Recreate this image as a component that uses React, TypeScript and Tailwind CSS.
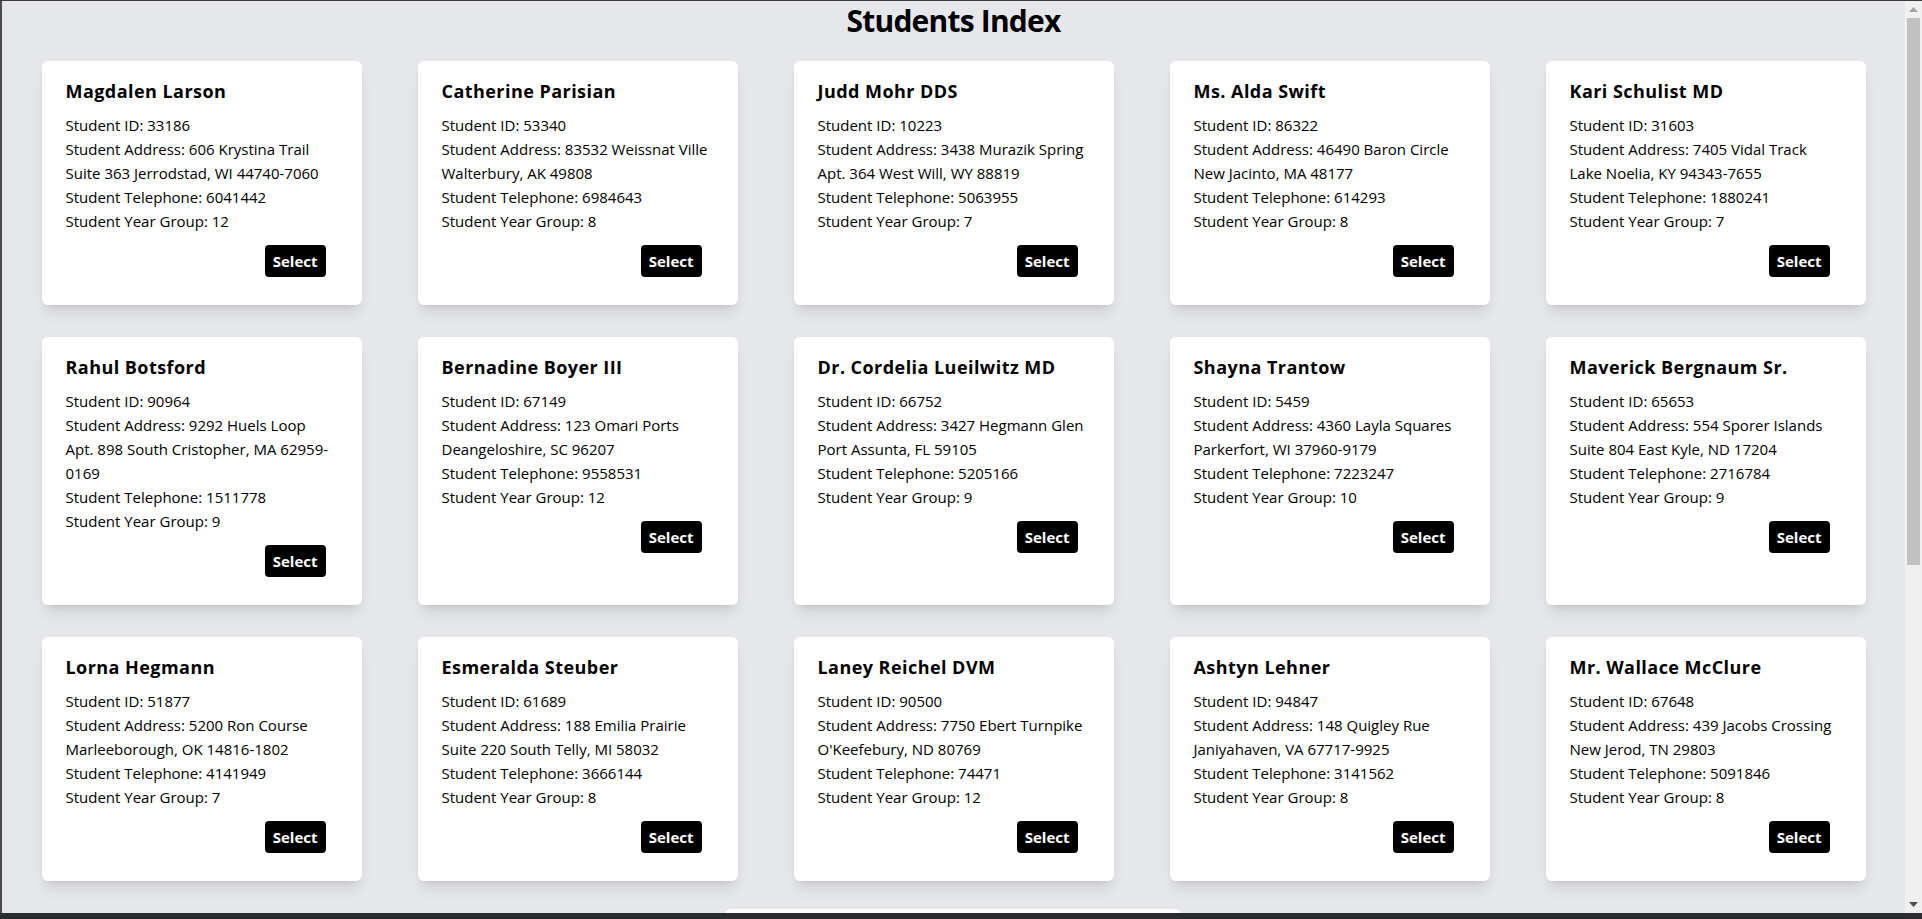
type Student = {
  name: string;
  id: string;
  address: string[];
  telephone: string;
  yearGroup: string;
};

const students: Student[] = [
  { name: "Magdalen Larson", id: "33186", address: ["606 Krystina Trail", "Suite 363 Jerrodstad, WI 44740-7060"], telephone: "6041442", yearGroup: "12" },
  { name: "Catherine Parisian", id: "53340", address: ["83532 Weissnat Ville", "Walterbury, AK 49808"], telephone: "6984643", yearGroup: "8" },
  { name: "Judd Mohr DDS", id: "10223", address: ["3438 Murazik Spring", "Apt. 364 West Will, WY 88819"], telephone: "5063955", yearGroup: "7" },
  { name: "Ms. Alda Swift", id: "86322", address: ["46490 Baron Circle", "New Jacinto, MA 48177"], telephone: "614293", yearGroup: "8" },
  { name: "Kari Schulist MD", id: "31603", address: ["7405 Vidal Track", "Lake Noelia, KY 94343-7655"], telephone: "1880241", yearGroup: "7" },
  { name: "Rahul Botsford", id: "90964", address: ["9292 Huels Loop", "Apt. 898 South Cristopher, MA 62959-", "0169"], telephone: "1511778", yearGroup: "9" },
  { name: "Bernadine Boyer III", id: "67149", address: ["123 Omari Ports", "Deangeloshire, SC 96207"], telephone: "9558531", yearGroup: "12" },
  { name: "Dr. Cordelia Lueilwitz MD", id: "66752", address: ["3427 Hegmann Glen", "Port Assunta, FL 59105"], telephone: "5205166", yearGroup: "9" },
  { name: "Shayna Trantow", id: "5459", address: ["4360 Layla Squares", "Parkerfort, WI 37960-9179"], telephone: "7223247", yearGroup: "10" },
  { name: "Maverick Bergnaum Sr.", id: "65653", address: ["554 Sporer Islands", "Suite 804 East Kyle, ND 17204"], telephone: "2716784", yearGroup: "9" },
  { name: "Lorna Hegmann", id: "51877", address: ["5200 Ron Course", "Marleeborough, OK 14816-1802"], telephone: "4141949", yearGroup: "7" },
  { name: "Esmeralda Steuber", id: "61689", address: ["188 Emilia Prairie", "Suite 220 South Telly, MI 58032"], telephone: "3666144", yearGroup: "8" },
  { name: "Laney Reichel DVM", id: "90500", address: ["7750 Ebert Turnpike", "O'Keefebury, ND 80769"], telephone: "74471", yearGroup: "12" },
  { name: "Ashtyn Lehner", id: "94847", address: ["148 Quigley Rue", "Janiyahaven, VA 67717-9925"], telephone: "3141562", yearGroup: "8" },
  { name: "Mr. Wallace McClure", id: "67648", address: ["439 Jacobs Crossing", "New Jerod, TN 29803"], telephone: "5091846", yearGroup: "8" },
];

function StudentCard({ student }: { student: Student }) {
  return (
    <div className="rounded-md bg-white px-6 pt-4 pb-7 shadow-lg">
      <h2 className="mb-2 text-[18px] leading-7 font-bold tracking-[0.45px] text-black">
        {student.name}
      </h2>

      <div className="text-[15px] leading-6 text-black">
        <p className="whitespace-nowrap">Student ID: {student.id}</p>
        {student.address.map((line, i) => (
          <p key={i} className="whitespace-nowrap">
            {i === 0 ? `Student Address: ${line}` : line}
          </p>
        ))}
        <p className="whitespace-nowrap">Student Telephone: {student.telephone}</p>
        <p className="whitespace-nowrap">Student Year Group: {student.yearGroup}</p>
      </div>

      <div className="mt-3 flex justify-end">
        <button className="mr-3 flex h-8 items-center rounded bg-black px-2 text-[15px] font-bold text-white">
          Select
        </button>
      </div>
    </div>
  );
}

function Scrollbar() {
  return (
    <div className="flex w-[17px] flex-col items-center bg-[#f0f0f0]">
      <div className="flex h-[17px] items-center justify-center">
        <svg width="9" height="5" viewBox="0 0 9 5">
          <path d="M0 5 L4.5 0 L9 5 Z" fill="#a3a3a3" />
        </svg>
      </div>
      <div className="h-[547px] w-[13px] bg-[#c1c1c1]" />
      <div className="flex-1" />
      <div className="flex h-[17px] items-center justify-center">
        <svg width="9" height="5" viewBox="0 0 9 5">
          <path d="M0 0 L9 0 L4.5 5 Z" fill="#505050" />
        </svg>
      </div>
    </div>
  );
}

export default function App() {
  return (
    <div
      className="flex h-screen flex-col overflow-hidden bg-[#e5e7eb]"
      style={{ fontFamily: '"Open Sans", "Noto Sans", sans-serif' }}
    >
      <div className="h-px bg-[#3a3a3a]" />

      <div className="flex min-h-0 flex-1">
        <div className="w-[2px] bg-[#4a4a4a]" />

        {/* Page */}
        <main className="min-w-0 flex-1 overflow-hidden">
          <h1 className="mb-5 text-center text-[30px] leading-10 font-bold tracking-[-0.8px] text-black">
            Students Index
          </h1>

          <div className="grid grid-cols-[repeat(5,320px)] justify-center gap-x-14 gap-y-8">
            {students.map((s) => (
              <StudentCard key={s.id} student={s} />
            ))}
          </div>

          <div className="mt-7 ml-[723px] h-10 w-[456px] rounded-md bg-white" />
        </main>

        <Scrollbar />
      </div>

      <div className="h-[6px] bg-[#2b2c30]" />
    </div>
  );
}
